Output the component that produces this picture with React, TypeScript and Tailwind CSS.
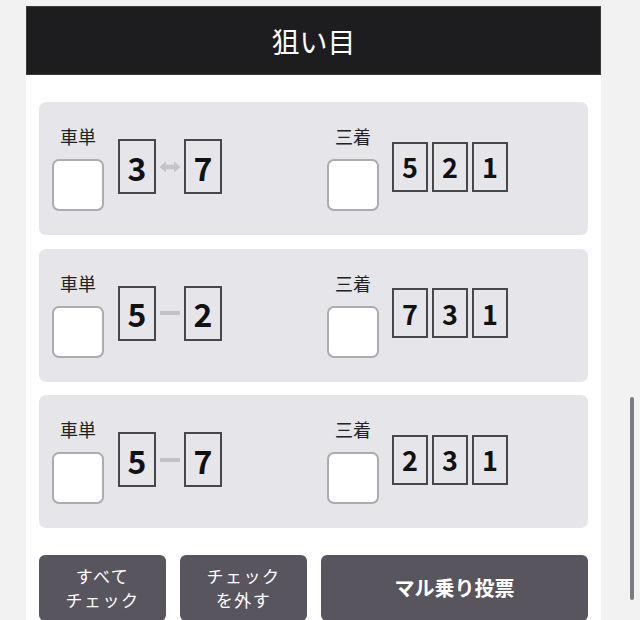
import React from 'react';

type Row = {
  pair: [number, number];
  arrow: 'both' | 'dash';
  trio: [number, number, number];
};

const rows: Row[] = [
  { pair: [3, 7], arrow: 'both', trio: [5, 2, 1] },
  { pair: [5, 2], arrow: 'dash', trio: [7, 3, 1] },
  { pair: [5, 7], arrow: 'dash', trio: [2, 3, 1] },
];

const CheckBlock: React.FC<{ label: string }> = ({ label }) => (
  <div className="flex flex-col items-center w-[52px] shrink-0">
    <span className="text-[18px] leading-[20px] text-[#222] mb-[13px]">{label}</span>
    <div className="w-[52px] h-[52px] bg-white border-2 border-[#acabb1] rounded-[7px]" />
  </div>
);

const Connector: React.FC<{ kind: 'both' | 'dash' }> = ({ kind }) =>
  kind === 'both' ? (
    <svg width="22" height="12" viewBox="0 0 22 12" className="shrink-0">
      <path d="M0.5 6 L7 0.5 L7 3.8 L15 3.8 L15 0.5 L21.5 6 L15 11.5 L15 8.2 L7 8.2 L7 11.5 Z" fill="#c4c3c8" />
    </svg>
  ) : (
    <div className="w-[20px] h-[4px] bg-[#c2c1c6] shrink-0 mx-[1px]" />
  );

export default function App() {
  return (
    <div className="h-[620px] overflow-hidden bg-[#f2f2f2] relative font-['Noto_Sans_CJK_JP','Noto_Sans',sans-serif]">
      <div className="pt-[6px] pl-[26px]">
        <div className="w-[575px] bg-white">
          {/* Header */}
          <div className="h-[69px] bg-[#1d1d20] border border-[#3a3a3d] flex items-center justify-center">
            <h1 className="text-white text-[28px] font-normal leading-none">狙い目</h1>
          </div>

          <div className="px-[13px] pt-[27px] pb-[20px]">
            <div className="flex flex-col gap-[13.5px]">
              {rows.map((row, i) => (
                <div key={i} className="h-[133px] bg-[#e6e5ea] rounded-[7px] grid grid-cols-2 gap-x-[27px] px-[13px]">
                  <div className="flex items-center">
                    <CheckBlock label="車単" />
                    <div className="flex items-center gap-[3px] ml-[14px] mb-[4px]">
                      <div className="w-[38px] h-[55px] border-2 border-[#48484b] flex items-center justify-center text-[32px] font-bold text-[#111] leading-none">
                        {row.pair[0]}
                      </div>
                      <Connector kind={row.arrow} />
                      <div className="w-[38px] h-[55px] border-2 border-[#48484b] flex items-center justify-center text-[32px] font-bold text-[#111] leading-none">
                        {row.pair[1]}
                      </div>
                    </div>
                  </div>
                  <div className="flex items-center">
                    <CheckBlock label="三着" />
                    <div className="flex items-center gap-[4px] ml-[13px] mb-[4px]">
                      {row.trio.map((n, j) => (
                        <div
                          key={j}
                          className="w-[36px] h-[50px] border-2 border-[#48484b] flex items-center justify-center text-[27px] font-bold text-[#111] leading-none"
                        >
                          {n}
                        </div>
                      ))}
                    </div>
                  </div>
                </div>
              ))}
            </div>

            {/* Buttons */}
            <div className="mt-[27px] flex gap-[14px]">
              <button className="w-[127px] h-[66px] bg-[#58555f] rounded-[6px] text-white text-[17px] leading-[24px] tracking-[1.5px]">
                すべて
                <br />
                チェック
              </button>
              <button className="w-[127px] h-[66px] bg-[#58555f] rounded-[6px] text-white text-[17px] leading-[24px] tracking-[1.5px]">
                チェック
                <br />
                を外す
              </button>
              <button className="flex-1 h-[66px] bg-[#58555f] rounded-[6px] text-white text-[20px] font-bold">
                マル乗り投票
              </button>
            </div>
          </div>
        </div>
      </div>

      {/* scroll indicator */}
      <div className="absolute left-[630px] top-[397px] w-[4px] h-[203px] rounded-full bg-[#7c7b80]" />
    </div>
  );
}
